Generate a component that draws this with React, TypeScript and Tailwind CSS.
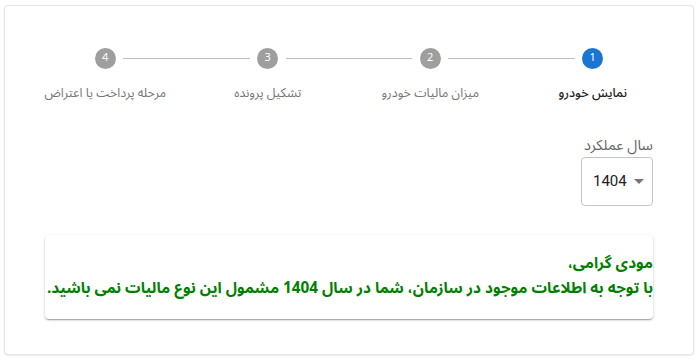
import React from "react";

const steps = ["نمایش خودرو", "میزان مالیات خودرو", "تشکیل پرونده", "مرحله پرداخت یا اعتراض"];

export default function App() {
  return (
    <div
      dir="rtl"
      className="w-[700px] h-[360px] bg-white pt-[5px] pl-[4px] pr-[6px] pb-[5px]"
      style={{ fontFamily: '"Noto Sans Arabic", Vazirmatn, "DejaVu Sans", sans-serif' }}
    >
      <div className="h-[350px] rounded-[4px] border border-[#e6e6e6] shadow-[0_1px_2px_rgba(0,0,0,0.08)] bg-white pt-[42px] px-[19px]">
        <div className="grid grid-cols-4">
          {steps.map((s, i) => (
            <div key={i} className="relative flex flex-col items-center">
              {i > 0 && (
                <div className="absolute top-[10px] left-[calc(50%+18px)] right-[calc(-50%+18px)] h-px bg-[#bdbdbd]" />
              )}
              <div
                className={`w-[21px] h-[21px] rounded-full flex items-center justify-center text-white text-[11px] ${
                  i === 0 ? "bg-[#1976d2]" : "bg-[#9e9e9e]"
                }`}
              >
                {i + 1}
              </div>
              <div
                className={`mt-[14px] text-[12.5px] leading-[20px] ${
                  i === 0 ? "text-[#212121] font-medium" : "text-[#757575]"
                }`}
              >
                {s}
              </div>
            </div>
          ))}
        </div>

        <div className="px-[21px] mt-[33px]">
          <div className="flex flex-col items-start">
            <div className="text-[14.5px] leading-[20px] text-[#666666]">سال عملکرد</div>
            <div
              dir="ltr"
              className="mt-[1px] w-[72px] h-[49px] rounded-[4px] border border-[#c4c4c4] flex items-center pl-[11px]"
            >
              <span className="text-[15px] text-[#212121]" style={{ fontFamily: '"Roboto", sans-serif' }}>1404</span>
              <svg className="ml-[7px]" width="10" height="5" viewBox="0 0 10 5">
                <path d="M0 0 L10 0 L5 5 Z" fill="#757575" />
              </svg>
            </div>
          </div>

          <div className="mt-[29px] h-[84px] rounded-[4px] bg-white shadow-[0_1px_3px_rgba(0,0,0,0.2),0_1px_1px_rgba(0,0,0,0.14),0_2px_1px_-1px_rgba(0,0,0,0.12)] pt-[16px] text-[#008000] font-bold text-[15.3px] leading-[25px] whitespace-nowrap">
            <div>مودی گرامی،</div>
            <div>با توجه به اطلاعات موجود در سازمان، شما در سال 1404 مشمول این نوع مالیات نمی باشید.</div>
          </div>
        </div>
      </div>
    </div>
  );
}
